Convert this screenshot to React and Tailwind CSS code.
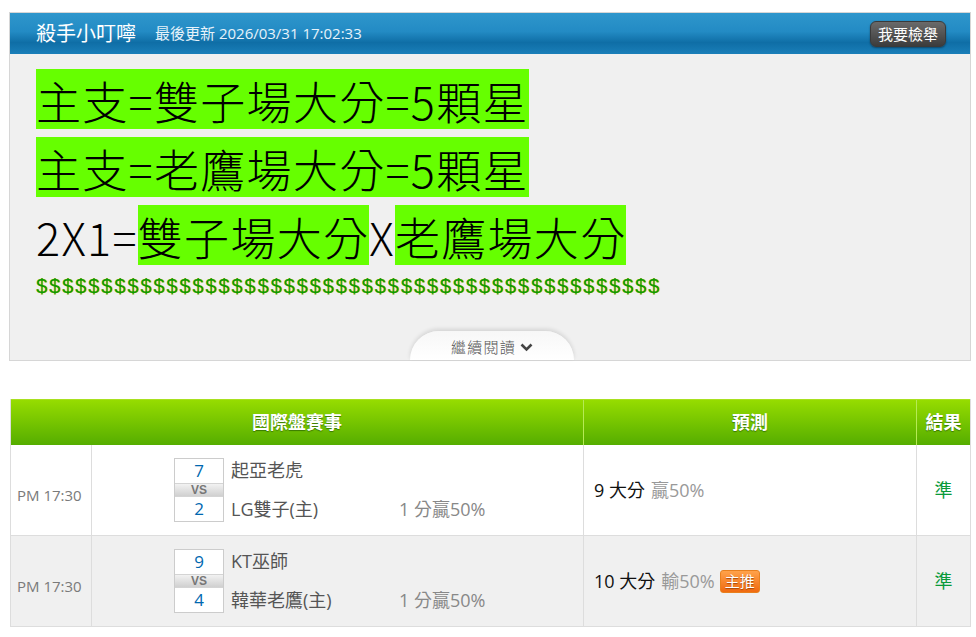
import React from 'react'

const font = { fontFamily: '"Open Sans", "Noto Sans CJK TC", sans-serif' }

const Hi = ({ children }) => (
    <span className='inline-block h-[60px] leading-[64px] bg-[#66ff00]'>{children}</span>
)

const Score = ({ a, b }) => (
    <div className='w-[50px] border border-[#cccccc] flex flex-col text-center'>
        <div className='h-[24px] leading-[24px] bg-white text-[#0068b0] text-[17px]'>{a}</div>
        <div className='h-[14px] leading-[13px] border-y border-[#d4d4d4] bg-[linear-gradient(to_bottom,#f2f2f2,#d0d0d0)] text-[12px] font-bold text-[#777]' style={{ fontFamily: '"Liberation Sans", sans-serif' }}>VS</div>
        <div className='h-[24px] leading-[24px] bg-white text-[#0068b0] text-[17px]'>{b}</div>
    </div>
)

const Row = ({ bg, a, b, teamA, teamB, pick, rate, badge }) => (
    <div className={`flex h-[91px] border-b border-[#dddddd] ${bg}`}>
        <div className='w-[81px] border-r border-[#dddddd] flex items-center pl-[6px] pt-[10px] text-[15px] text-[#7a7a7a]'>PM 17:30</div>
        <div className='w-[492px] border-r border-[#dddddd] flex items-center pl-[82px]'>
            <Score a={a} b={b} />
            <div className='ml-[7px] flex flex-col justify-between h-[66px] text-[18px] text-[#555]'>
                <div>{teamA}</div>
                <div className='flex'>
                    <span className='w-[168px]'>{teamB}</span>
                    <span className='text-[#888]'>1 分贏50%</span>
                </div>
            </div>
        </div>
        <div className='w-[333px] border-r border-[#dddddd] flex items-center pl-[10px] text-[18px]'>
            <span className='text-[#111]'>{pick}</span>
            <span className='ml-[6px] text-[#999]'>{rate}</span>
            {badge && (
                <span className='ml-[5px] px-[4px] h-[23px] leading-[21px] rounded-[3px] text-white text-[15px] bg-[linear-gradient(to_bottom,#ffa24a,#f06a10)] border border-[#e8801e] [text-shadow:0_1px_1px_#a0440a]'>主推</span>
            )}
        </div>
        <div className='flex-1 flex items-center justify-center text-[18px] text-[#0a9a3a]'>準</div>
    </div>
)

export default function App() {
    return (
        <div className='w-[976px] h-[637px] bg-white pt-[12px] pl-[9px] overflow-hidden' style={font}>
            {/* Notice panel */}
            <div className='w-[962px] border border-[#d6d6d6] bg-[#f0f0f0]'>
                <div className='h-[41px] flex items-center pl-[26px] pr-[24px] bg-[linear-gradient(to_bottom,#2e96cc_0%,#238bc4_45%,#0f6ea6_72%,#1a7fb9_100%)]'>
                    <span className='text-white text-[20px]'>殺手小叮嚀</span>
                    <span className='ml-[19px] text-[#e6f2fa] text-[15px]'>最後更新 2026/03/31 17:02:33</span>
                    <span className='ml-auto h-[26px] leading-[24px] px-[7px] rounded-[6px] border border-[#3a3a3a] text-white text-[15px] bg-[linear-gradient(to_bottom,#6a6a6a,#3c3c3c)] shadow-[0_1px_2px_rgba(0,0,0,0.4)]'>我要檢舉</span>
                </div>
                <div className='relative h-[306px] pt-[15px] pl-[26px] text-black text-[45px] font-light tracking-[1.3px]' style={{ fontFamily: '"Noto Sans CJK TC", sans-serif' }}>
                    <div className='flex flex-col gap-[8px]'>
                        <div className='flex h-[60px]'><Hi>主支=雙子場大分=5顆星</Hi></div>
                        <div className='flex h-[60px]'><Hi>主支=老鷹場大分=5顆星</Hi></div>
                        <div className='flex h-[60px] leading-[64px]'>2X1=<Hi>雙子場大分</Hi>X<Hi>老鷹場大分</Hi></div>
                    </div>
                    <div className='mt-[8px] text-[20px] leading-[26px] tracking-[1.9px] text-[#0a9a0a] [text-shadow:1px_0_0_#e8c000]' style={{ fontFamily: '"Liberation Sans", sans-serif' }}>
                        {'$'.repeat(48)}
                    </div>
                    {/* read more tab */}
                    <div className='absolute bottom-0 left-[400px] w-[164px] h-[29px] rounded-t-[34px] bg-[linear-gradient(to_bottom,#f7f7f7,#ffffff)] shadow-[0_-2px_4px_rgba(0,0,0,0.12)] flex items-center justify-center gap-[4px] pt-[3px] text-[15px] text-[#555]'>
                        <span>繼續閱讀</span>
                        <svg width='13' height='9' viewBox='0 0 13 9'><path d='M1.5 1.5 L6.5 6.5 L11.5 1.5' fill='none' stroke='#444' strokeWidth='2.6' /></svg>
                    </div>
                </div>
            </div>

            {/* Table */}
            <div className='mt-[38px] ml-[1px] w-[961px] border-x border-[#dddddd]'>
                <div className='flex h-[46px] border-t border-[#a8e020] bg-[linear-gradient(to_bottom,#96dc00,#55ad00)] text-white text-[18px] font-bold [text-shadow:0_1px_1px_#3a7a00]'>
                    <div className='w-[573px] border-r border-[#b6ea55] flex items-center justify-center'>國際盤賽事</div>
                    <div className='w-[333px] border-r border-[#b6ea55] flex items-center justify-center'>預測</div>
                    <div className='flex-1 flex items-center justify-center'>結果</div>
                </div>
                <Row bg='bg-white' a='7' b='2' teamA='起亞老虎' teamB='LG雙子(主)' pick='9 大分' rate='贏50%' />
                <Row bg='bg-[#f0f0f0]' a='9' b='4' teamA='KT巫師' teamB='韓華老鷹(主)' pick='10 大分' rate='輸50%' badge />
            </div>
        </div>
    )
}
